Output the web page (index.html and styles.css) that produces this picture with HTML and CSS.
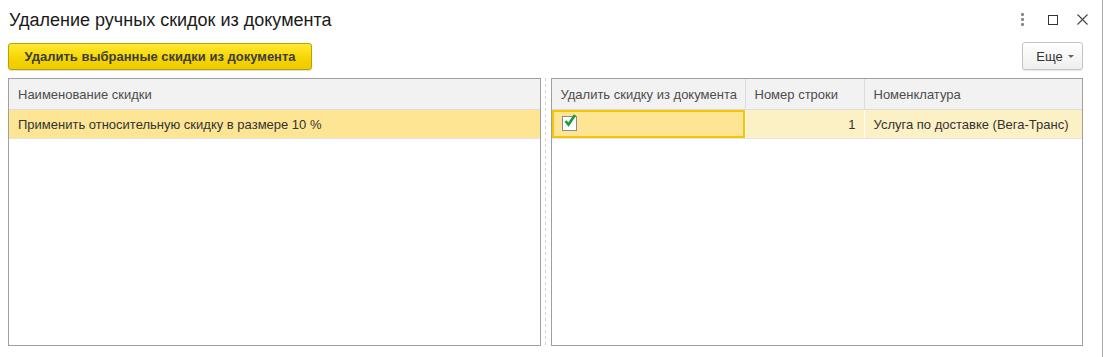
FILE: index.html
```html
<!DOCTYPE html>
<html lang="ru">

<head>
    <meta charset="UTF-8">
    <title>Удаление ручных скидок из документа</title>
    <link rel="stylesheet" href="styles.css">
</head>

<body>
    <div class="window">
        <div class="titlebar">
            <h1>Удаление ручных скидок из документа</h1>
            <div class="win-tools">
                <span class="dots"><i></i><i></i><i></i></span>
                <span class="maxbox"></span>
                <svg class="closex" width="11" height="11" viewBox="0 0 11 11">
                    <path d="M0.5 0.5 L10.5 10.5 M10.5 0.5 L0.5 10.5" stroke="#444" stroke-width="1.1" />
                </svg>
            </div>
        </div>

        <div class="toolbar">
            <button class="btn-main">Удалить выбранные скидки из документа</button>
            <button class="btn-more">Еще <span class="caret"></span></button>
        </div>

        <div class="panels">
            <div class="grid left">
                <div class="head">
                    <div class="cell">Наименование скидки</div>
                </div>
                <div class="row selected">
                    <div class="cell">Применить относительную скидку в размере 10 %</div>
                </div>
            </div>

            <div class="splitter"></div>

            <div class="grid right">
                <div class="head cols">
                    <div class="cell">Удалить скидку из документа</div>
                    <div class="cell">Номер строки</div>
                    <div class="cell">Номенклатура</div>
                </div>
                <div class="row cols current">
                    <div class="cell active">
                        <span class="check">
                            <svg width="16" height="16" viewBox="0 0 16 16">
                                <path d="M3.5 8 L6.5 11.5 L13 2" fill="none" stroke="#1a9a3c" stroke-width="2.6" />
                            </svg>
                        </span>
                    </div>
                    <div class="cell num">1</div>
                    <div class="cell">Услуга по доставке (Вега-Транс)</div>
                </div>
            </div>
        </div>
    </div>
</body>

</html>
```

FILE: styles.css
```css
/* Общие стили */
body {
    margin: 0;
    background: #fff;
    font-family: "Liberation Sans", Arial, sans-serif;
    color: #333;
}

.window {
    width: 1103px;
    height: 357px;
    box-sizing: border-box;
    border-right: 1px solid #a8a8a8;
    padding: 0 19px 11px 8px;
    display: flex;
    flex-direction: column;
}

/* Заголовок */
.titlebar {
    height: 38px;
    display: flex;
    align-items: center;
    justify-content: space-between;
    margin-right: -5px;
}

h1 {
    margin: 2px 0 0 1px;
    font-size: 18px;
    font-weight: normal;
    color: #1a1a1a;
}

.win-tools {
    display: flex;
    align-items: center;
    padding-top: 1px;
}

.dots {
    display: flex;
    flex-direction: column;
    gap: 2px;
    width: 3px;
    margin-right: 24px;
}

.dots i {
    display: block;
    width: 3px;
    height: 3px;
    border-radius: 1px;
    background: #888;
}

.maxbox {
    width: 8px;
    height: 8px;
    border: 1px solid #333;
    margin-right: 19px;
}

.closex {
    display: block;
}

/* Панель кнопок */
.toolbar {
    height: 40px;
    display: flex;
    justify-content: space-between;
    align-items: flex-start;
    padding-top: 5px;
    box-sizing: border-box;
}

.btn-main {
    height: 27px;
    width: 304px;
    padding: 0;
    font-family: inherit;
    font-size: 13px;
    font-weight: bold;
    color: #3d3d3d;
    background: linear-gradient(#ffe933, #f5d400 60%, #efcb00);
    border: 1px solid #b9a200;
    border-radius: 3px;
    box-shadow: 0 1px 1px rgba(0, 0, 0, 0.15);
    cursor: pointer;
}

.btn-more {
    height: 28px;
    width: 61px;
    margin-top: -1px;
    padding: 0 0 0 5px;
    font-family: inherit;
    font-size: 13px;
    color: #333;
    background: linear-gradient(#ffffff, #efefef);
    border: 1px solid #c4c4c4;
    border-radius: 3px;
    box-shadow: 0 1px 1px rgba(0, 0, 0, 0.1);
    display: flex;
    align-items: center;
    justify-content: center;
    gap: 5px;
}

.caret {
    width: 0;
    height: 0;
    border-left: 3px solid transparent;
    border-right: 3px solid transparent;
    border-top: 3px solid #666;
    margin-top: 1px;
}

/* Таблицы */
.panels {
    flex: 1;
    display: flex;
}

.grid {
    flex: 1;
    border: 1px solid #a0a0a0;
    background: #fff;
}

.splitter {
    width: 10px;
    background: linear-gradient(#d4d4d4 50%, transparent 50%) 4px 0 / 1px 6px repeat-y;
}

.head {
    height: 30px;
    background: #f2f2f2;
    border-bottom: 1px solid #dcdcdc;
    display: flex;
    font-size: 13px;
    color: #4d4d4d;
}

.row {
    height: 28px;
    border-bottom: 1px solid #e4e4e4;
    display: flex;
    font-size: 13px;
    color: #333;
}

.cell {
    display: flex;
    align-items: center;
    padding: 0 9px;
    box-sizing: border-box;
    white-space: nowrap;
}

.left .cell {
    flex: 1;
}

.selected {
    background: #fde593;
}

.cols .cell:nth-child(1) {
    width: 193px;
}

.cols .cell:nth-child(2) {
    width: 119px;
}

.cols .cell:nth-child(3) {
    flex: 1;
}

.head.cols .cell + .cell {
    border-left: 1px solid #dcdcdc;
}

.current {
    background: #fcf0c5;
}

.current .cell + .cell {
    border-left: 1px solid #fff;
}

.cell.active {
    background: #fde593;
    border: 2px solid #f6c500;
    padding-left: 8px;
}

.cell.num {
    justify-content: flex-end;
    padding-right: 8px;
}

.check {
    position: relative;
    width: 13px;
    height: 13px;
    border: 1px solid #8c8c8c;
    background: #fff;
    margin-top: -1px;
}

.check svg {
    position: absolute;
    left: -1px;
    top: -4px;
}
```
